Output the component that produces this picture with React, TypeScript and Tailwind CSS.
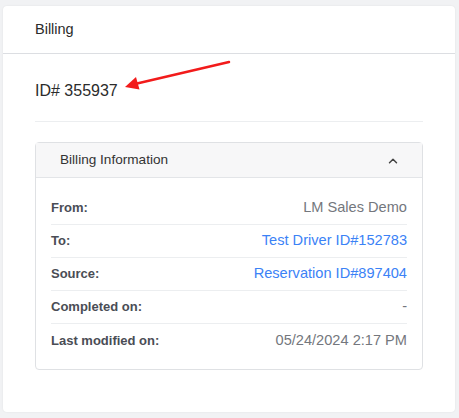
import { ChevronUp } from "lucide-react";

const rows = [
  { label: "From:", value: "LM Sales Demo", link: false },
  { label: "To:", value: "Test Driver ID#152783", link: true },
  { label: "Source:", value: "Reservation ID#897404", link: true },
  { label: "Completed on:", value: "-", link: false },
  { label: "Last modified on:", value: "05/24/2024 2:17 PM", link: false },
];

const App = () => {
  return (
    <div
      className="h-[418px] w-[459px] bg-[#f1f2f4] pl-[3px] pr-[4px] pt-[6px]"
      style={{ fontFamily: '"Liberation Sans", Arial, sans-serif' }}
    >
      <div className="relative h-[406px] rounded-[4px] bg-white shadow-[0_0_2px_rgba(0,0,0,0.08)]">
        {/* Header */}
        <div className="flex h-[48px] items-center border-b border-[#dcdee2] px-[32px] pt-[1px] text-[14.5px] text-[#2b2b2b]">
          Billing
        </div>

        {/* ID */}
        <div className="mx-[32px] flex h-[68px] items-center border-b border-[#eceef0] pt-[6px] text-[16px] text-[#2b2b2b]">
          ID# 355937
        </div>

        {/* Billing info panel */}
        <div className="mx-[32px] mt-[20px] rounded-[4px] border border-[#dfe1e4]">
          <div className="flex h-[35px] items-center justify-between border-b border-[#e3e5e8] bg-[#f7f7f8] pl-[24px] pr-[22px] pt-[1px] text-[13.6px] text-[#333]">
            <span>Billing Information</span>
            <ChevronUp size={14} strokeWidth={2.5} className="text-[#444]" />
          </div>
          <div className="px-[15px] pb-[12px] pt-[14px]">
            {rows.map((r, i) => (
              <div
                key={r.label}
                className={`flex h-[33px] items-center justify-between ${
                  i < rows.length - 1 ? "border-b border-[#eceef0]" : ""
                }`}
              >
                <span className="text-[13px] font-bold text-[#4a4d55]">{r.label}</span>
                <span
                  className={`text-[14.6px] ${r.link ? "text-[#3b82f6]" : "text-[#74777d]"}`}
                >
                  {r.value}
                </span>
              </div>
            ))}
          </div>
        </div>

        {/* Annotation arrow */}
        <svg className="absolute left-0 top-0" width="452" height="120" viewBox="0 0 452 120">
          <line x1="226" y1="56" x2="134" y2="77.5" stroke="#f21b1b" strokeWidth="2.5" strokeLinecap="round" />
          <polygon points="122,81 136.5,83.5 133,71" fill="#f21b1b" />
        </svg>
      </div>
    </div>
  );
};

export default App;
